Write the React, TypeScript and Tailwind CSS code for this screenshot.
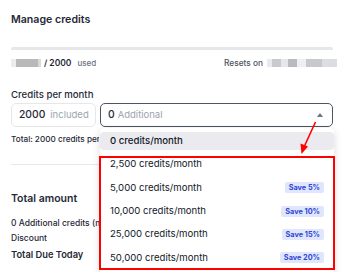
import React from "react";

const options = [
  { label: "2,500 credits/month", save: null as string | null },
  { label: "5,000 credits/month", save: "Save 5%" },
  { label: "10,000 credits/month", save: "Save 10%" },
  { label: "25,000 credits/month", save: "Save 15%" },
  { label: "50,000 credits/month", save: "Save 20%" },
];

function Redacted({ parts }: { parts: { w: number; c: string }[] }) {
  return (
    <span className="flex h-[8px]">
      {parts.map((p, i) => (
        <span key={i} className="h-full" style={{ width: p.w, backgroundColor: p.c }} />
      ))}
    </span>
  );
}

export default function App() {
  return (
    <div className="relative h-[272px] w-[344px] overflow-hidden bg-white font-['Inter',sans-serif] text-[#1f2937]">
      <div className="flex flex-col px-[11px] pt-[12px]">
        <h1 className="text-[10.6px] leading-[16px] font-semibold">Manage credits</h1>

        <div className="mt-[19px] h-[3px] w-[322px] rounded-full bg-[#e5e7eb]" />

        <div className="mt-[7px] mr-[-4px] flex h-[12px] items-center justify-between">
          <div className="flex items-center gap-[3px]">
            <Redacted
              parts={[
                { w: 5, c: "#ececec" },
                { w: 22, c: "#b9b9b9" },
                { w: 3, c: "#d9d9d9" },
              ]}
            />
            <span className="text-[8.5px] font-semibold">/ 2000</span>
            <span className="ml-[3px] text-[8px] font-medium text-[#6b7280]">used</span>
          </div>
          <div className="flex items-center gap-[4px]">
            <span className="text-[8.3px] font-medium text-[#4b5563]">Resets on</span>
            <Redacted
              parts={[
                { w: 5, c: "#e9e9ee" },
                { w: 9, c: "#c9cad0" },
                { w: 7, c: "#e6e7ea" },
                { w: 9, c: "#b9bbc2" },
                { w: 9, c: "#eeeff1" },
                { w: 16, c: "#c6c8ce" },
                { w: 15, c: "#dcdde1" },
              ]}
            />
          </div>
        </div>

        <p className="mt-[20px] text-[9.6px] leading-[12px] font-medium">Credits per month</p>

        <div className="mt-[2px] flex gap-[4px]">
          <div className="flex h-[24px] w-[85px] items-center gap-[5px] rounded-[5px] border border-[#e5e7eb] px-[7px]">
            <span className="text-[10.3px] font-medium">2000</span>
            <span className="text-[9.5px] text-[#9ca3af]">included</span>
          </div>
          <div className="relative flex h-[24px] flex-1 items-center gap-[3px] rounded-[5px] border border-[#4b5563] px-[7px]">
            <span className="text-[10.3px] font-medium">0</span>
            <span className="text-[9.5px] text-[#9ca3af]">Additional</span>
            <span className="absolute top-[9px] right-[9px] h-0 w-0 border-x-[3px] border-b-[4px] border-x-transparent border-b-[#6b7280]" />
          </div>
        </div>

        <p className="mt-[6px] w-[88px] overflow-hidden text-[8.2px] leading-[12px] font-medium whitespace-nowrap">
          Total: 2000 credits per month
        </p>

        <div className="mt-[19px] h-px w-full bg-[#e5e7eb]" />

        <p className="mt-[26px] text-[10.5px] leading-[16px] font-semibold">Total amount</p>
        <p className="mt-[10px] w-[88px] overflow-hidden text-[8.5px] leading-[12px] font-medium whitespace-nowrap">
          0 Additional credits (monthly)
        </p>
        <p className="mt-[3px] text-[8.5px] leading-[12px] font-medium">Discount</p>
        <p className="mt-[4px] text-[9.3px] leading-[14px] font-semibold">Total Due Today</p>
      </div>

      <div className="absolute top-[128px] left-[100px] flex h-[160px] w-[234px] flex-col gap-[5.4px] rounded-[5px] bg-white pt-[4px] shadow-[0_2px_8px_rgba(0,0,0,0.14)]">
        <div className="flex h-[18px] shrink-0 items-center rounded-[4px] bg-[#ebebef] px-[10px] text-[9.6px] font-medium text-[#111827]">
          0 credits/month
        </div>
        {options.map((o) => (
          <div
            key={o.label}
            className="flex h-[18px] shrink-0 items-center justify-between pr-[10px] pl-[10px] text-[9.6px] text-[#111827]"
          >
            <span>{o.label}</span>
            {o.save && (
              <span className="rounded-[2px] bg-[#e0e6fd] px-[4px] text-[7.3px] leading-[11px] font-bold text-[#3048d4]">
                {o.save}
              </span>
            )}
          </div>
        ))}
      </div>

      <div className="absolute top-[156px] left-[99px] h-[114px] w-[236px] border-2 border-[#ff0000]" />

      <svg className="absolute top-0 left-0" width="344" height="272" viewBox="0 0 344 272">
        <line x1="315.5" y1="122" x2="304.5" y2="146" stroke="#ff0000" strokeWidth="1.6" />
        <polygon points="301.5,154 300.5,143.5 308,146.5" fill="#ff0000" />
      </svg>
    </div>
  );
}
